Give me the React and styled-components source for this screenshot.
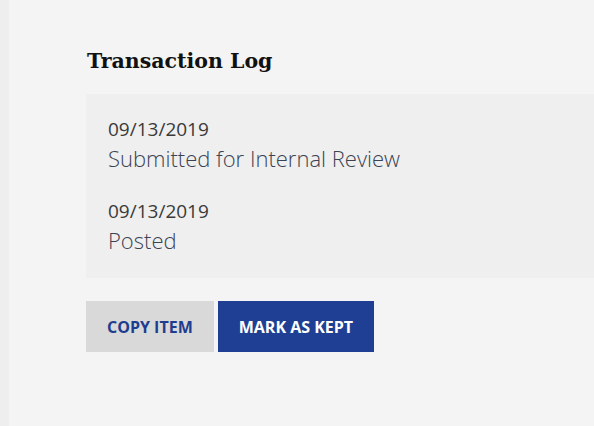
import styled, { createGlobalStyle } from 'styled-components';

const GlobalStyle = createGlobalStyle`
  html, body {
    margin: 0;
    padding: 0;
    background: #f4f4f4;
  }
  body {
    font-family: 'Open Sans', 'Liberation Sans', sans-serif;
  }
`;

const Page = styled.div`
  display: flex;
  min-height: 426px;
  overflow: hidden;
`;

const SideStrip = styled.div`
  width: 9px;
  flex-shrink: 0;
  background: #eeeeee;
`;

const Main = styled.main`
  flex: 1;
  padding: 46px 0 0 77px;
  min-width: 0;
`;

const Title = styled.h2`
  margin: 0 0 18px 1px;
  font-family: 'DejaVu Serif', 'Liberation Serif', serif;
  font-weight: 700;
  font-size: 20.5px;
  line-height: 30px;
  color: #111;
`;

const LogPanel = styled.ul`
  list-style: none;
  margin: 0;
  padding: 22px 22px 21px;
  width: 600px;
  background: #efefef;
  display: flex;
  flex-direction: column;
  gap: 23px;
`;

const Entry = styled.li`
  display: flex;
  flex-direction: column;
`;

const EntryDate = styled.span`
  font-size: 19px;
  line-height: 26px;
  color: #3a3a3a;
`;

const EntryStatus = styled.span`
  font-size: 22px;
  font-weight: 300;
  line-height: 33px;
  color: #3b4352;
`;

const Actions = styled.div`
  display: flex;
  gap: 4px;
  margin-top: 23px;
`;

const ActionButton = styled.button`
  height: 51px;
  padding: 0 21px;
  border: none;
  font-family: 'Open Sans', 'Liberation Sans', sans-serif;
  font-weight: 700;
  font-size: 16px;
  text-transform: uppercase;
  cursor: pointer;
  background: ${(p) => (p.$primary ? '#1e3f94' : '#d9d9d9')};
  color: ${(p) => (p.$primary ? '#ffffff' : '#1f3d8f')};
`;

const entries = [
  { date: '09/13/2019', status: 'Submitted for Internal Review' },
  { date: '09/13/2019', status: 'Posted' },
];

export default function App() {
  return (
    <>
      <GlobalStyle />
      <Page>
        <SideStrip />
        <Main>
          <Title>Transaction Log</Title>
          <LogPanel>
            {entries.map((e, i) => (
              <Entry key={i}>
                <EntryDate>{e.date}</EntryDate>
                <EntryStatus>{e.status}</EntryStatus>
              </Entry>
            ))}
          </LogPanel>
          <Actions>
            <ActionButton>Copy Item</ActionButton>
            <ActionButton $primary>Mark as Kept</ActionButton>
          </Actions>
        </Main>
      </Page>
    </>
  );
}
